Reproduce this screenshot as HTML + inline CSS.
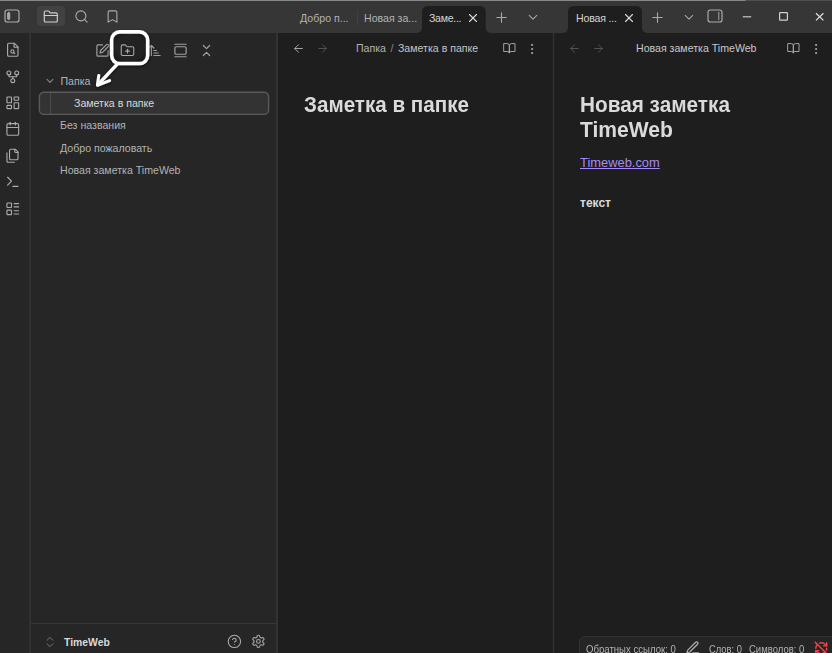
<!DOCTYPE html>
<html><head><meta charset="utf-8">
<style>
*{box-sizing:border-box;margin:0;padding:0}
html,body{width:832px;height:653px;overflow:hidden;background:#1e1e1e;font-family:"Liberation Sans",sans-serif;color:#dadada}
.abs{position:absolute}
svg.ic{position:absolute;fill:none;stroke:#ababab;stroke-width:1.750;stroke-linecap:round;stroke-linejoin:round;overflow:visible}
.t{position:absolute;white-space:nowrap;line-height:1;font-size:10.6px;color:#b3b3b3}
.b{font-weight:700}
</style></head><body>
<!-- title / tab strip -->
<div class="abs" style="left:0;top:0;width:832px;height:33px;background:#363636"></div>
<div class="abs" style="left:0;top:0;width:832px;height:1px;background:linear-gradient(90deg,#888 0,#888 745px,#505050 746px,#505050 100%)"></div>
<!-- ribbon -->
<div class="abs" style="left:0;top:33px;width:31px;height:620px;background:#262626;border-right:2px solid #313131"></div>
<!-- sidebar -->
<div class="abs" style="left:31px;top:33px;width:246px;height:620px;background:#262626"></div>
<div class="abs" style="left:276px;top:33px;width:2px;height:620px;background:#323232"></div>
<!-- pane divider -->
<div class="abs" style="left:553px;top:33px;width:1px;height:620px;background:#303030;box-shadow:-1px 0 #222222,1px 0 #222222"></div>

<!-- SIDEBAR TAB ICONS -->
<div class="abs" style="left:37px;top:6px;width:28px;height:20px;border-radius:4px;background:#424242"></div>
<svg class="ic" style="left:4.450px;top:8.300px;width:16px;height:16px" viewBox="0 0 24 24"><rect x="1.500" y="3" width="21" height="18" rx="3.500"/><rect x="5.300" y="6.600" width="3.400" height="10.800" rx="1.700" fill="#ababab" stroke-width="1.300"/></svg>
<svg class="ic" style="left:43.300px;top:8.700px;width:15.600px;height:15.600px;stroke:#d0d0d0" viewBox="0 0 24 24"><path d="M20 20a2 2 0 0 0 2-2V8a2 2 0 0 0-2-2h-7.900a2 2 0 0 1-1.690-.9L9.600 3.900A2 2 0 0 0 7.930 3H4a2 2 0 0 0-2 2v13a2 2 0 0 0 2 2Z"/><path d="M2 10h20"/></svg>
<svg class="ic" style="left:73.700px;top:9.200px;width:15px;height:15px" viewBox="0 0 24 24"><circle cx="11" cy="11" r="8"/><path d="m21 21-4.300-4.300"/></svg>
<svg class="ic" style="left:104.700px;top:9.200px;width:15px;height:15px" viewBox="0 0 24 24"><path d="m19 21-7-4-7 4V5a2 2 0 0 1 2-2h10a2 2 0 0 1 2 2v16z"/></svg>

<!-- RIBBON ICONS -->
<svg class="ic" style="left:4.800px;top:42.4px;width:15.600px;height:15.600px" viewBox="0 0 24 24"><path d="M14.500 2H6a2 2 0 0 0-2 2v16a2 2 0 0 0 2 2h12a2 2 0 0 0 2-2V7.500L14.500 2z"/><polyline points="14 2 14 8 20 8"/><circle cx="11.500" cy="14.500" r="2.500"/><path d="M13.250 16.250 15 18"/></svg>
<svg class="ic" style="left:4.800px;top:68.7px;width:15.600px;height:15.600px" viewBox="0 0 24 24"><circle cx="12" cy="18" r="3"/><circle cx="6" cy="6" r="3"/><circle cx="18" cy="6" r="3"/><path d="M18 9v2c0 .6-.4 1-1 1H7c-.6 0-1-.4-1-1V9"/><path d="M12 12v3"/></svg>
<svg class="ic" style="left:4.800px;top:95.1px;width:15.600px;height:15.600px" viewBox="0 0 24 24"><rect width="7" height="9" x="3" y="3" rx="1"/><rect width="7" height="5" x="14" y="3" rx="1"/><rect width="7" height="9" x="14" y="12" rx="1"/><rect width="7" height="5" x="3" y="16" rx="1"/></svg>
<svg class="ic" style="left:4.800px;top:121.4px;width:15.600px;height:15.600px" viewBox="0 0 24 24"><rect width="18" height="18" x="3" y="4" rx="2"/><path d="M16 2v4"/><path d="M8 2v4"/><path d="M3 10h18"/></svg>
<svg class="ic" style="left:4.800px;top:147.7px;width:15.600px;height:15.600px" viewBox="0 0 24 24"><path d="M20 7h-3a2 2 0 0 1-2-2V2"/><path d="M9 18a2 2 0 0 1-2-2V4a2 2 0 0 1 2-2h7l4 4v10a2 2 0 0 1-2 2Z"/><path d="M3 7.600v12.800A1.600 1.600 0 0 0 4.600 22h9.800"/></svg>
<svg class="ic" style="left:4.800px;top:174.2px;width:15.600px;height:15.600px" viewBox="0 0 24 24"><polyline points="4 17 10 11 4 5"/><line x1="12" x2="20" y1="19" y2="19"/></svg>
<svg class="ic" style="left:4.800px;top:200.5px;width:15.600px;height:15.600px" viewBox="0 0 24 24"><rect width="7" height="7" x="3" y="3" rx="1"/><rect width="7" height="7" x="3" y="14" rx="1"/><path d="M14 4h7"/><path d="M14 9h7"/><path d="M14 15h7"/><path d="M14 20h7"/></svg>

<!-- NAV BUTTONS -->
<svg class="ic" style="left:94.5px;top:42.600px;width:15px;height:15px;stroke:#a0a0a0;stroke-width:1.900" viewBox="0 0 24 24"><path d="M12 3H5a2 2 0 0 0-2 2v14a2 2 0 0 0 2 2h14a2 2 0 0 0 2-2v-7"/><path d="M18.375 2.625a2.121 2.121 0 1 1 3 3L12 15l-4 1 1-4Z"/></svg>
<svg class="ic" style="left:146.5px;top:42.600px;width:15px;height:15px;stroke:#a0a0a0;stroke-width:1.900" viewBox="0 0 24 24"><path d="m3 8 4-4 4 4"/><path d="M7 4v16"/><path d="M11 12h4"/><path d="M11 16h7"/><path d="M11 20h10"/></svg>
<svg class="ic" style="left:172.5px;top:42.600px;width:15px;height:15px;stroke:#a0a0a0;stroke-width:1.900" viewBox="0 0 24 24"><path d="M3 2h18"/><rect width="18" height="12" x="3" y="6" rx="2"/><path d="M3 22h18"/></svg>
<svg class="ic" style="left:198.5px;top:42.600px;width:15px;height:15px;stroke:#a0a0a0;stroke-width:1.900" viewBox="0 0 24 24"><path d="m7 20 5-5 5 5"/><path d="m7 4 5 5 5-5"/></svg>

<!-- highlight box + arrow -->
<svg class="abs" style="left:80px;top:20px;width:100px;height:90px;overflow:visible" viewBox="80 20 100 90">
<defs><radialGradient id="rg" cx="50%" cy="50%" r="60%"><stop offset="0" stop-color="#252525"/><stop offset="0.600" stop-color="#222222"/><stop offset="1" stop-color="#191919"/></radialGradient><filter id="sh" x="-30%" y="-30%" width="160%" height="160%"><feDropShadow dx="0" dy="1" stdDeviation="1.600" flood-color="#000" flood-opacity="0.750"/></filter></defs>
<g filter="url(#sh)" fill="none" stroke="#fff" stroke-linecap="round" stroke-linejoin="round">
<rect x="111.650" y="31.850" width="36" height="31.700" rx="8.200" stroke-width="3.600" fill="url(#rg)"/>
<path d="M117.500 63.800 L98 84.600" stroke-width="3.300"/>
<path d="M98.800 75.400 L97.400 85.300 L109.600 80.600" stroke-width="3"/>
</g></svg>
<svg class="ic" style="left:120px;top:42.600px;width:15px;height:15px;stroke:#a8a8a8" viewBox="0 0 24 24"><path d="M12 10v6"/><path d="M9 13h6"/><path d="M20 20a2 2 0 0 0 2-2V8a2 2 0 0 0-2-2h-7.900a2 2 0 0 1-1.690-.9L9.600 3.900A2 2 0 0 0 7.930 3H4a2 2 0 0 0-2 2v13a2 2 0 0 0 2 2Z"/></svg>

<!-- FILE TREE -->
<svg class="ic" style="left:45px;top:76px;width:10px;height:10px;stroke:#808080;stroke-width:2.900" viewBox="0 0 24 24"><path d="m5 8 7 7.500 7-7.500"/></svg>
<div class="t" style="left:60.500px;top:76px">Папка</div>
<svg class="abs" style="left:36px;top:88px;width:240px;height:32px" viewBox="36 88 240 32"><rect x="39.400" y="92.300" width="229.200" height="22.100" rx="4.500" fill="#333333" stroke="#5a5a5a" stroke-width="1.400"/></svg>
<div class="abs" style="left:50px;top:93px;width:1px;height:21px;background:#4c4c4c"></div>
<div class="t" style="left:74px;top:98px;color:#dadada">Заметка в папке</div>
<div class="t" style="left:60px;top:120px">Без названия</div>
<div class="t" style="left:60px;top:142.600px">Добро пожаловать</div>
<div class="t" style="left:60px;top:164.600px">Новая заметка TimeWeb</div>

<!-- VAULT FOOTER -->
<div class="abs" style="left:31px;top:623px;width:246px;height:1px;background:#363636"></div>
<svg class="ic" style="left:43px;top:634.800px;width:14px;height:14px;stroke:#7c7c7c;stroke-width:1.600" viewBox="0 0 24 24"><path d="m7 15 5 5 5-5"/><path d="m7 9 5-5 5 5"/></svg>
<div class="t b" style="left:64px;top:637.500px;color:#dadada;font-size:10.400px">TimeWeb</div>
<svg class="ic" style="left:226.800px;top:634.400px;width:14.800px;height:14.800px" viewBox="0 0 24 24"><circle cx="12" cy="12" r="10"/><path d="M9.090 9a3 3 0 0 1 5.830 1c0 2-3 3-3 3"/><path d="M12 17h.01"/></svg>
<svg class="ic" style="left:251.400px;top:634.400px;width:14.800px;height:14.800px" viewBox="0 0 24 24"><path d="M12.220 2h-.44a2 2 0 0 0-2 2v.18a2 2 0 0 1-1 1.730l-.43.250a2 2 0 0 1-2 0l-.15-.08a2 2 0 0 0-2.730.730l-.22.380a2 2 0 0 0 .730 2.730l.150.100a2 2 0 0 1 1 1.720v.510a2 2 0 0 1-1 1.740l-.150.090a2 2 0 0 0-.730 2.730l.220.380a2 2 0 0 0 2.730.730l.150-.080a2 2 0 0 1 2 0l.430.250a2 2 0 0 1 1 1.730V20a2 2 0 0 0 2 2h.440a2 2 0 0 0 2-2v-.180a2 2 0 0 1 1-1.730l.430-.250a2 2 0 0 1 2 0l.150.080a2 2 0 0 0 2.730-.730l.220-.390a2 2 0 0 0-.730-2.730l-.150-.080a2 2 0 0 1-1-1.740v-.500a2 2 0 0 1 1-1.740l.150-.090a2 2 0 0 0 .730-2.730l-.220-.380a2 2 0 0 0-2.730-.730l-.150.080a2 2 0 0 1-2 0l-.430-.250a2 2 0 0 1-1-1.730V4a2 2 0 0 0-2-2z"/><circle cx="12" cy="12" r="3"/></svg>

<!-- CENTER TABS -->
<div class="t" style="left:300px;top:13.300px">Добро п...</div>
<div class="abs" style="left:357px;top:10px;width:1px;height:16px;background:#404040"></div>
<div class="t" style="left:364px;top:13.300px">Новая за...</div>
<svg class="abs" style="left:412px;top:0;width:90px;height:34px" viewBox="412 0 90 34"><path d="M416 33 Q422 33 422 27 V12 Q422 6 428 6 H479.700 Q485.700 6 485.700 12 V27 Q485.700 33 491.700 33 Z" fill="#1e1e1e"/></svg>
<div class="t" style="left:429px;top:13.300px;color:#d4d4d4;letter-spacing:-0.300px">Заме...</div>
<svg class="ic" style="left:467px;top:12px;width:12px;height:12px;stroke:#d6d6d6;stroke-width:2.300" viewBox="0 0 24 24"><path d="M19 5 5 19"/><path d="m5 5 14 14"/></svg>
<svg class="ic" style="left:494px;top:10px;width:15px;height:15px" viewBox="0 0 24 24"><path d="M4.600 12h14.800"/><path d="M12 4.600v14.800"/></svg>
<svg class="ic" style="left:526px;top:10px;width:14px;height:14px" viewBox="0 0 24 24"><path d="m5.500 9.300 6.500 6.500 6.500-6.500"/></svg>

<!-- RIGHT TABS -->
<svg class="abs" style="left:558px;top:0;width:100px;height:34px" viewBox="558 0 100 34"><path d="M562 33 Q568 33 568 27 V12 Q568 6 574 6 H636 Q642 6 642 12 V27 Q642 33 648 33 Z" fill="#1e1e1e"/></svg>
<div class="t" style="left:576px;top:13.300px;color:#d4d4d4;letter-spacing:-0.200px">Новая ...</div>
<svg class="ic" style="left:623px;top:12px;width:12px;height:12px;stroke:#d6d6d6;stroke-width:2.300" viewBox="0 0 24 24"><path d="M19 5 5 19"/><path d="m5 5 14 14"/></svg>
<svg class="ic" style="left:650px;top:10px;width:15px;height:15px" viewBox="0 0 24 24"><path d="M4.600 12h14.800"/><path d="M12 4.600v14.800"/></svg>
<svg class="ic" style="left:682px;top:10px;width:14px;height:14px" viewBox="0 0 24 24"><path d="m5.500 9.300 6.500 6.500 6.500-6.500"/></svg>
<svg class="ic" style="left:706.900px;top:8.250px;width:16px;height:16px" viewBox="0 0 24 24"><rect x="1.500" y="3" width="21" height="18" rx="3.500"/><path d="M17.600 6.500v11" stroke-width="1.700" stroke="#9a9a9a"/></svg>
<!-- window controls -->
<svg class="ic" style="left:740px;top:10px;width:14px;height:14px;stroke:#d4d4d4;stroke-width:1.100;stroke-linecap:butt" viewBox="0 0 14 14"><path d="M2.800 6.800H11.200"/></svg>
<svg class="ic" style="left:776px;top:9px;width:14px;height:14px;stroke:#d0d0d0;stroke-width:1.200;stroke-linejoin:miter" viewBox="0 0 14 14"><rect x="3.600" y="3.700" width="7.800" height="7.500" rx="0.600"/></svg>
<svg class="ic" style="left:812px;top:9px;width:14px;height:14px;stroke:#e0e0e0;stroke-width:1.250;stroke-linecap:butt" viewBox="0 0 14 14"><path d="M4 4.200 11.400 11.400"/><path d="M11.400 4.200 4 11.400"/></svg>

<!-- CENTER VIEW HEADER -->
<svg class="ic" style="left:292px;top:42px;width:13px;height:13px" viewBox="0 0 24 24"><path d="m12 19-7-7 7-7"/><path d="M19 12H5"/></svg>
<svg class="ic" style="left:316px;top:42px;width:13px;height:13px;stroke:#555" viewBox="0 0 24 24"><path d="M5 12h14"/><path d="m12 5 7 7-7 7"/></svg>
<div class="t" style="left:356px;top:43px"><span>Папка</span><span style="color:#8a8a8a;margin:0 4.500px">/</span><span style="color:#c4c4c4">Заметка в папке</span></div>
<svg class="ic" style="left:502.700px;top:42px;width:12.700px;height:12.700px;stroke:#adadad" viewBox="0 0 24 24"><path d="M2 3h6a4 4 0 0 1 4 4v14a3 3 0 0 0-3-3H2z"/><path d="M22 3h-6a4 4 0 0 0-4 4v14a3 3 0 0 1 3-3h7z"/></svg>
<svg class="ic" style="left:525px;top:41.500px;width:14px;height:14px;stroke:#b0b0b0;fill:#b0b0b0;stroke-width:1.400" viewBox="0 0 24 24"><circle cx="12" cy="12" r="1"/><circle cx="12" cy="5" r="1"/><circle cx="12" cy="19" r="1"/></svg>

<!-- RIGHT VIEW HEADER -->
<svg class="ic" style="left:568px;top:42px;width:13px;height:13px;stroke:#555" viewBox="0 0 24 24"><path d="m12 19-7-7 7-7"/><path d="M19 12H5"/></svg>
<svg class="ic" style="left:592px;top:42px;width:13px;height:13px;stroke:#555" viewBox="0 0 24 24"><path d="M5 12h14"/><path d="m12 5 7 7-7 7"/></svg>
<div class="t" style="left:636px;top:43px;color:#c8c8c8">Новая заметка TimeWeb</div>
<svg class="ic" style="left:787px;top:42px;width:12.700px;height:12.700px;stroke:#adadad" viewBox="0 0 24 24"><path d="M2 3h6a4 4 0 0 1 4 4v14a3 3 0 0 0-3-3H2z"/><path d="M22 3h-6a4 4 0 0 0-4 4v14a3 3 0 0 1 3-3h7z"/></svg>
<svg class="ic" style="left:809.200px;top:41.500px;width:14px;height:14px;stroke:#b0b0b0;fill:#b0b0b0;stroke-width:1.400" viewBox="0 0 24 24"><circle cx="12" cy="12" r="1"/><circle cx="12" cy="5" r="1"/><circle cx="12" cy="19" r="1"/></svg>

<!-- CONTENT -->
<div class="t b" style="left:304px;top:95.100px;font-size:21.300px;transform:scaleX(0.968);transform-origin:0 0;color:#dadada">Заметка в папке</div>
<div class="t b" style="left:580px;top:95.100px;font-size:21.300px;transform:scaleX(0.975);transform-origin:0 0;color:#dadada">Новая заметка</div>
<div class="t b" style="left:580px;top:120.300px;font-size:21.300px;transform:scaleX(0.990);transform-origin:0 0;color:#dadada">TimeWeb</div>
<div class="t" style="left:580px;top:156.600px;font-size:12.900px;color:#a68af9;text-decoration:underline">Timeweb.com</div>
<div class="t b" style="left:580px;top:197px;font-size:12px;color:#dadada">текст</div>

<!-- STATUS BAR -->
<div class="abs" style="left:579px;top:636px;width:260px;height:20px;background:#252525;border:1px solid #313131;border-radius:6px 0 0 0"></div>
<div class="t" style="left:586px;top:644.800px;font-size:10.400px;transform:scaleX(0.923);transform-origin:0 0">Обратных ссылок: 0</div>
<svg class="ic" style="left:685.400px;top:640px;width:15.500px;height:15.500px;stroke:#b0b0b0;stroke-width:1.900" viewBox="0 0 24 24"><path d="M12 20h9"/><path d="M16.500 3.500a2.121 2.121 0 0 1 3 3L7 19l-4 1 1-4L16.500 3.500z"/></svg>
<div class="t" style="left:709px;top:644.800px;font-size:10.400px;transform:scaleX(0.900);transform-origin:0 0">Слов: 0</div>
<div class="t" style="left:749px;top:644.800px;font-size:10.400px;transform:scaleX(0.915);transform-origin:0 0">Символов: 0</div>
<svg class="ic" style="left:814.300px;top:641.200px;width:14.500px;height:14.500px;stroke:#f4464e;stroke-width:2.300" viewBox="0 0 24 24"><path d="M21 8L18.740 5.740A9.750 9.750 0 0 0 12 3C11 3 10.030 3.160 9.130 3.470"/><path d="M8 16H3v5"/><path d="M3 12C3 9.510 4 7.260 5.640 5.640"/><path d="m3 16 2.260 2.260A9.750 9.750 0 0 0 12 21c2.490 0 4.740-1 6.360-2.640"/><path d="M21 12c0 1-.160 1.970-.470 2.870"/><path d="M21 3v5h-5"/><path d="M22 22 2 2"/></svg>
</body></html>
